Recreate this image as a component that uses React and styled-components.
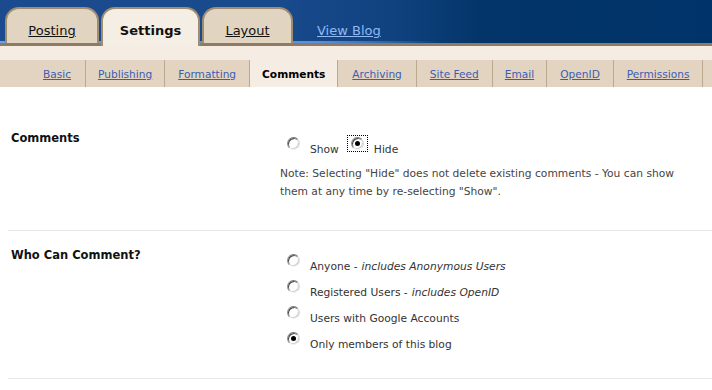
import React from "react";
import styled, { createGlobalStyle } from "styled-components";

const GlobalStyle = createGlobalStyle`
  body {
    margin: 0;
    background: #fff;
    font-family: "DejaVu Sans", Verdana, sans-serif;
    color: #333;
  }
`;

const Header = styled.div`
  height: 43px;
  display: flex;
  align-items: flex-end;
  padding-left: 5px;
  border-bottom: 3px solid #8e7b62;
  background:
    linear-gradient(to right, #6e9fe2 0%, #5b8ed6 45%, rgba(80, 130, 210, 0) 62%) bottom / 100% 2px no-repeat,
    linear-gradient(to right, #1b4b8e 0%, #184a8c 40%, #10427f 55%, #033569 68%, #00336a 100%);
`;

const MainTab = styled.a`
  box-sizing: border-box;
  width: ${(p) => p.$w}px;
  height: ${(p) => (p.$active ? 39 : 36)}px;
  margin-right: 2px;
  margin-bottom: ${(p) => (p.$active ? -3 : 0)}px;
  padding-top: 14px;
  text-align: center;
  font-size: 13px;
  line-height: 16px;
  font-weight: ${(p) => (p.$active ? "bold" : "normal")};
  color: #111;
  text-decoration: ${(p) => (p.$active ? "none" : "underline")};
  background: ${(p) => (p.$active ? "#f5eee4" : "#e1d5c2")};
  border: 2px solid #a08c6f;
  border-bottom: none;
  border-radius: 14px 14px 0 0;
`;

const ViewBlog = styled.a`
  margin-left: 22px;
  margin-bottom: 4px;
  font-size: 13px;
  line-height: 16px;
  color: #93b8f2;
  text-decoration: underline;
`;

const SubNav = styled.div`
  background: #f5ede4;
  padding-top: 14px;
`;

const SubTabs = styled.div`
  display: flex;
  height: 27px;
  padding-left: 29px;
  background: #e2d4c1;
`;

const SubTab = styled.a`
  display: flex;
  align-items: center;
  padding: 0 ${(p) => p.$pad}px;
  border-right: 1px solid #bba98f;
  font-size: 10.6px;
  font-weight: ${(p) => (p.$active ? "bold" : "normal")};
  color: ${(p) => (p.$active ? "#000" : "#3c5cb2")};
  text-decoration: ${(p) => (p.$active ? "none" : "underline")};
  background: ${(p) => (p.$active ? "#f5ede4" : "transparent")};
`;

const Body = styled.div`
  padding-top: 27px;
`;

const Section = styled.div`
  display: flex;
  margin-left: 8px;
  padding: 17px 0 ${(p) => p.$bottom}px 3px;
  border-bottom: 1px solid #e8e8e8;
`;

const Label = styled.div`
  width: 269px;
  flex-shrink: 0;
  font-size: 11.5px;
  line-height: 14px;
  font-weight: bold;
  color: #111;
`;

const Field = styled.div`
  width: 420px;
  padding-top: 10px;
  display: flex;
  flex-direction: column;
  gap: ${(p) => p.$gap || 0}px;
`;

const Row = styled.div`
  display: flex;
  align-items: flex-start;
  font-size: 10.7px;
  line-height: 18px;
  color: #333;
`;

const Choice = styled.label`
  display: flex;
  align-items: flex-start;
  margin-right: 9px;
`;

const Focus = styled.span`
  display: flex;
  margin-top: -5px;
  margin-left: ${(p) => p.$ml}px;
  margin-right: 7px;
  padding: 1px 3px;
  outline: ${(p) => (p.$focus ? "1px dotted #000" : "none")};
`;

const Radio = styled.span`
  box-sizing: border-box;
  width: 13px;
  height: 13px;
  border-radius: 50%;
  border: 1px solid;
  border-color: #7c7c7c #dcdcdc #f2f2f2 #8c8c8c;
  box-shadow: inset 1px 1px 0 #4a4a4a, inset -1px -1px 0 #d4d0c8;
  background: #fff;
  display: flex;
  align-items: center;
  justify-content: center;
  &::after {
    content: "";
    width: 5px;
    height: 5px;
    border-radius: 50%;
    background: ${(p) => (p.$checked ? "#000" : "transparent")};
  }
`;

const Hint = styled.i`
  margin-left: 4px;
`;

const Note = styled.div`
  margin-top: 6px;
  margin-bottom: 4px;
  font-size: 10.7px;
  line-height: 18px;
  color: #444;
`;

const subTabs = [
  ["Basic", 14],
  ["Publishing", 12],
  ["Formatting", 13],
  ["Comments", 12, true],
  ["Archiving", 14],
  ["Site Feed", 13],
  ["Email", 12],
  ["OpenID", 13],
  ["Permissions", 13],
];

const who = [
  ["Anyone", "includes Anonymous Users"],
  ["Registered Users", "includes OpenID"],
  ["Users with Google Accounts"],
  ["Only members of this blog", null, true],
];

export default function App() {
  return (
    <>
      <GlobalStyle />
      <Header>
        <MainTab $w={94}>Posting</MainTab>
        <MainTab $w={99} $active>
          Settings
        </MainTab>
        <MainTab $w={91}>Layout</MainTab>
        <ViewBlog>View Blog</ViewBlog>
      </Header>
      <SubNav>
        <SubTabs>
          {subTabs.map(([name, pad, active]) => (
            <SubTab key={name} $pad={pad} $active={active}>
              {name}
            </SubTab>
          ))}
        </SubTabs>
      </SubNav>
      <Body>
        <Section $bottom={25}>
          <Label>Comments</Label>
          <Field>
            <Row>
              <Choice>
                <Focus $ml={4}>
                  <Radio />
                </Focus>
                Show
              </Choice>
              <Choice>
                <Focus $ml={0} $focus>
                  <Radio $checked />
                </Focus>
                Hide
              </Choice>
            </Row>
            <Note>
              Note: Selecting "Hide" does not delete existing comments - You can show them at any
              time by re-selecting "Show".
            </Note>
          </Field>
        </Section>
        <Section $bottom={24}>
          <Label>Who Can Comment?</Label>
          <Field $gap={8}>
            {who.map(([text, hint, checked]) => (
              <Row key={text}>
                <Choice>
                  <Focus $ml={4}>
                    <Radio $checked={checked} />
                  </Focus>
                  {text}
                  {hint && (
                    <>
                      {" "}-<Hint>{hint}</Hint>
                    </>
                  )}
                </Choice>
              </Row>
            ))}
          </Field>
        </Section>
      </Body>
    </>
  );
}
